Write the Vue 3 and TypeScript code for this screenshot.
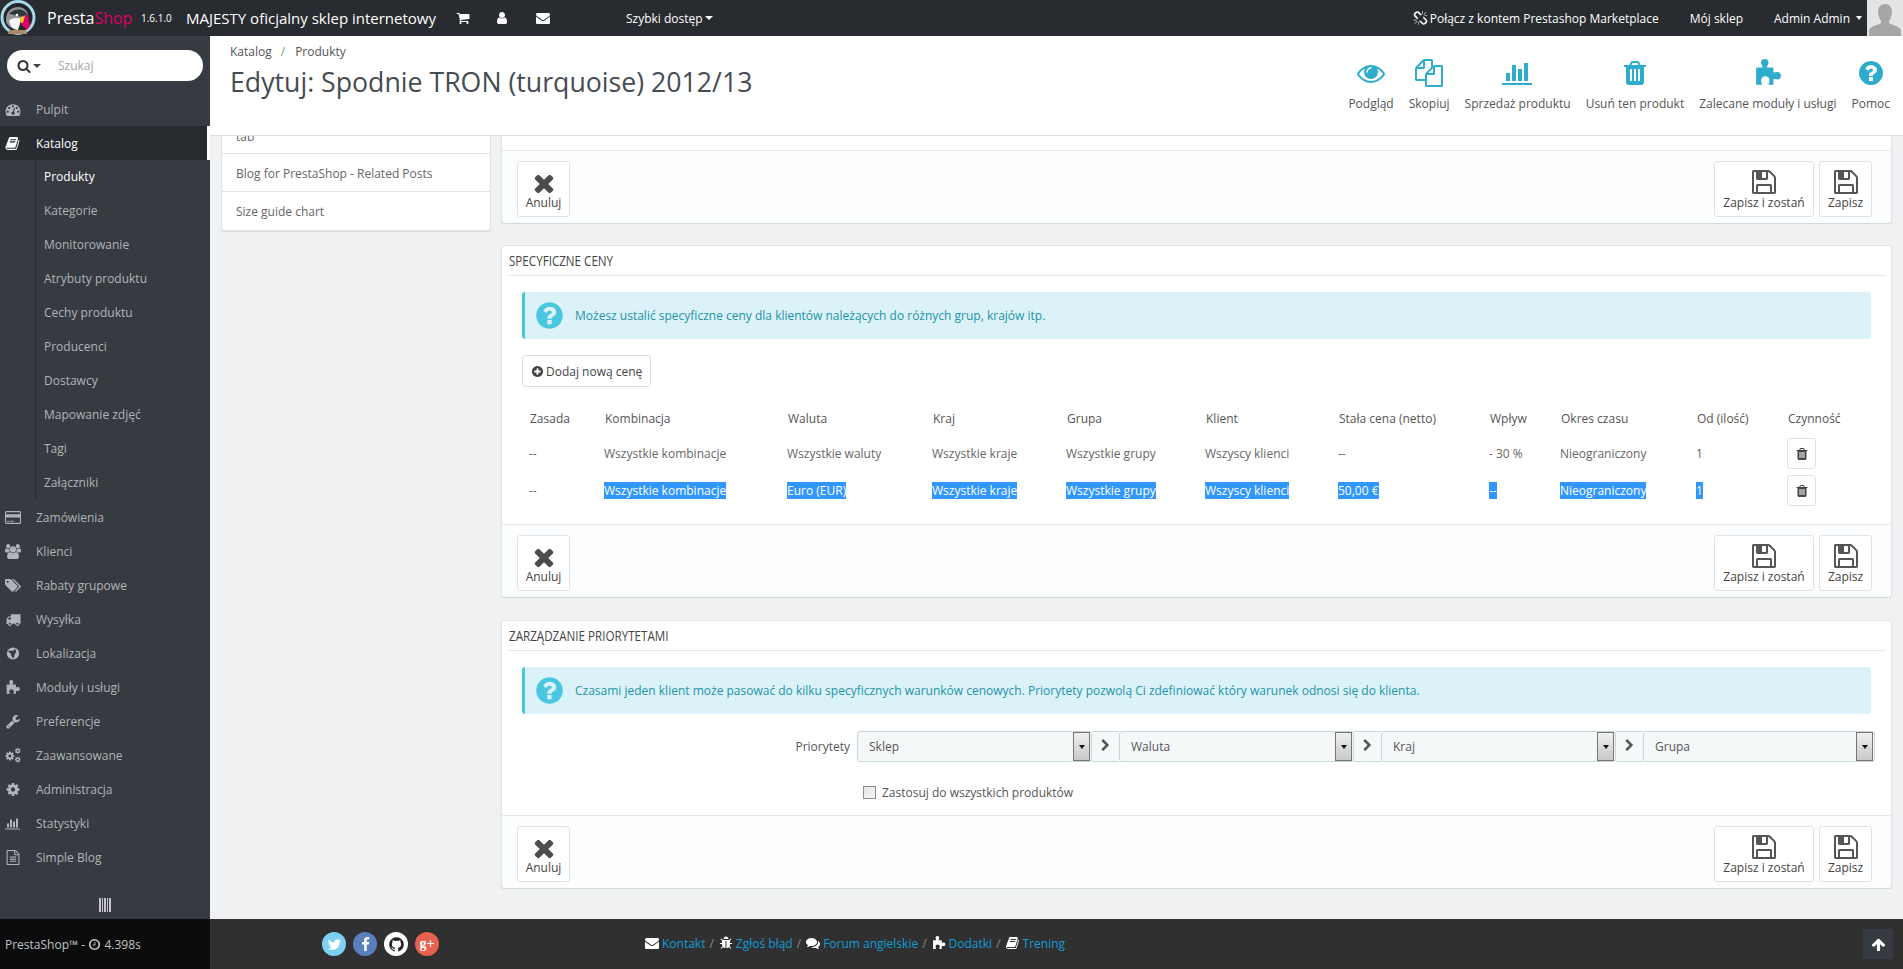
<script setup lang="ts">
type Ic = { d: string; w?: number }
const I: Record<string, Ic> = {
  times: { d: 'M1490 1322q0 40-28 68l-136 136q-28 28-68 28t-68-28l-294-294-294 294q-28 28-68 28t-68-28l-136-136q-28-28-28-68t28-68l294-294-294-294q-28-28-28-68t28-68l136-136q28-28 68-28t68 28l294 294 294-294q28-28 68-28t68 28l136 136q28 28 28 68t-28 68l-294 294 294 294q28 28 28 68z' },
  save: { d: 'M512 1536h768v-384h-768v384zm896 0h128v-896q0-14-10-38.5t-20-34.5l-281-281q-10-10-34-20t-39-10v416q0 40-28 68t-68 28h-576q-40 0-68-28t-28-68v-416h-128v1280h128v-416q0-40 28-68t68-28h832q40 0 68 28t28 68v416zm-384-928v-320q0-13-9.5-22.5t-22.5-9.5h-192q-13 0-22.5 9.5t-9.5 22.5v320q0 13 9.5 22.5t22.5 9.5h192q13 0 22.5-9.5t9.5-22.5zm640 32v928q0 40-28 68t-68 28h-1344q-40 0-68-28t-28-68v-1344q0-40 28-68t68-28h928q40 0 88 20t76 48l280 280q28 28 48 76t20 88z' },
  help: { d: 'M1024 1376v-192q0-14-9-23t-23-9h-192q-14 0-23 9t-9 23v192q0 14 9 23t23 9h192q14 0 23-9t9-23zm256-672q0-88-55.5-163t-138.5-116-170-41q-243 0-371 213-15 24 8 42l132 100q7 6 19 6 16 0 25-12 53-68 86-92 34-24 86-24 48 0 85.5 26t37.5 59q0 38-20 61t-68 45q-63 28-115.5 86.5t-52.5 125.5v36q0 14 9 23t23 9h192q14 0 23-9t9-23q0-19 21.5-49.5t54.5-49.5q32-18 49-28.5t46-35 44.5-48 28-60.5 12.5-81zm384 192q0 209-103 385.5t-279.5 279.5-385.5 103-385.5-103-279.5-279.5-103-385.5 103-385.5 279.5-279.5 385.5-103 385.5 103 279.5 279.5 103 385.5z' },
  trash: { d: 'M704 1376v-704q0-14-9-23t-23-9h-64q-14 0-23 9t-9 23v704q0 14 9 23t23 9h64q14 0 23-9t9-23zm256 0v-704q0-14-9-23t-23-9h-64q-14 0-23 9t-9 23v704q0 14 9 23t23 9h64q14 0 23-9t9-23zm256 0v-704q0-14-9-23t-23-9h-64q-14 0-23 9t-9 23v704q0 14 9 23t23 9h64q14 0 23-9t9-23zm-544-992h448l-48-117q-7-9-17-11h-317q-10 2-17 11zm928 32v64q0 14-9 23t-23 9h-96v948q0 83-47 143.5t-113 60.5h-832q-66 0-113-58.5t-47-141.5v-952h-96q-14 0-23-9t-9-23v-64q0-14 9-23t23-9h309l70-167q15-37 54-63t79-26h320q40 0 79 26t54 63l70 167h309q14 0 23 9t9 23z' },
  eye: { d: 'M1664 960q-152-236-381-353 61 104 61 225 0 185-131.5 316.5t-316.5 131.5-316.5-131.5-131.5-316.5q0-121 61-225-229 117-381 353 133 205 333.5 326.5t434.5 121.5 434.5-121.5 333.5-326.5zm-720-384q0-20-14-34t-34-14q-125 0-214.5 89.5t-89.5 214.5q0 20 14 34t34 14 34-14 14-34q0-86 61-147t147-61q20 0 34-14t14-34zm848 384q0 34-20 69-140 230-376.5 368.5t-499.5 138.5-499.5-139-376.5-368q-20-35-20-69t20-69q140-229 376.5-368t499.5-139 499.5 139 376.5 368q20 35 20 69z' },
  files: { d: 'M1696 384q40 0 68 28t28 68v1216q0 40-28 68t-68 28h-960q-40 0-68-28t-28-68v-288h-544q-40 0-68-28t-28-68v-672q0-40 20-88t48-76l408-408q28-28 76-48t88-20h416q40 0 68 28t28 68v328q68-40 128-40h416zm-544 213l-299 299h299v-299zm-640-384l-299 299h299v-299zm196 647l316-316v-416h-384v416q0 40-28 68t-68 28h-416v640h512v-256q0-40 20-88t48-76zm956 804v-1152h-384v416q0 40-28 68t-68 28h-416v640h896z' },
  chart: { w: 2048, d: 'M512 896v512h-256v-512h256zm384-512v1024h-256v-1024h256zm1024 1152v128h-2048v-1536h128v1408h1920zm-640-896v768h-256v-768h256zm384-384v1152h-256v-1152h256z' },
  search: { d: 'M1216 832q0-185-131.5-316.5t-316.5-131.5-316.5 131.5-131.5 316.5 131.5 316.5 316.5 131.5 316.5-131.5 131.5-316.5zm512 832q0 52-38 90t-90 38q-54 0-90-38l-343-342q-179 124-399 124-143 0-273.5-55.5t-225-150-150-225-55.5-273.5 55.5-273.5 150-225 225-150 273.5-55.5 273.5 55.5 225 150 150 225 55.5 273.5q0 220-124 399l343 343q37 37 37 90z' },
  cart: { d: 'M704 1536q0 52-38 90t-90 38-90-38-38-90 38-90 90-38 90 38 38 90zm896 0q0 52-38 90t-90 38-90-38-38-90 38-90 90-38 90 38 38 90zm128-1088v512q0 24-16.5 42.5t-40.5 21.5l-1044 122q13 60 13 70 0 16-24 64h920q26 0 45 19t19 45-19 45-45 19h-1024q-26 0-45-19t-19-45q0-11 8-31.5t16-36 21.5-40 15.5-29.5l-177-823h-204q-26 0-45-19t-19-45 19-45 45-19h256q16 0 28.5 6.5t19.5 15.5 13 24.5 8 26 5.5 29.5 4.5 26h1201q26 0 45 19t19 45z' },
  user: { d: 'M1536 1399q0 109-62.5 187t-150.5 78h-854q-88 0-150.5-78t-62.5-187q0-85 8.5-160.5t31.5-152 58.5-131 94-89 134.5-34.5q131 128 313 128t313-128q76 0 134.5 34.5t94 89 58.5 131 31.5 152 8.5 160.5zm-256-887q0 159-112.5 271.5t-271.5 112.5-271.5-112.5-112.5-271.5 112.5-271.5 271.5-112.5 271.5 112.5 112.5 271.5z' },
  envelope: { d: 'M1792 710v794q0 66-47 113t-113 47h-1472q-66 0-113-47t-47-113v-794q44 49 101 87 362 246 497 345 57 42 92.5 65.5t94.5 48 110 24.5h2q51 0 110-24.5t94.5-48 92.5-65.5q170-123 498-345 57-39 100-87zm0-294q0 79-49 151t-122 123q-376 261-468 325-10 7-42.5 30.5t-54 38-52 32.5-57.5 27-50 9h-2q-23 0-50-9t-57.5-27-52-32.5-54-38-42.5-30.5q-91-64-262-182.5t-205-142.5q-62-42-117-115.5t-55-136.5q0-78 41.5-130t118.5-52h1472q65 0 112.5 47t47.5 113z' },
  unlink: { d: 'M503 1271l-256 256q-10 9-23 9-12 0-23-9-9-10-9-23t9-23l256-256q10-9 23-9t23 9q9 10 9 23t-9 23zm169 41v320q0 14-9 23t-23 9-23-9-9-23v-320q0-14 9-23t23-9 23 9 9 23zm-224-224q0 14-9 23t-23 9h-320q-14 0-23-9t-9-23 9-23 23-9h320q14 0 23 9t9 23zm1264 128q0 120-85 203l-147 146q-83 83-203 83-121 0-204-85l-334-335q-21-21-42-56l239-18 273 274q27 27 68 27.5t68-26.5l147-146q28-28 28-67 0-40-28-68l-274-275 18-239q35 21 56 42l336 336q84 86 84 204zm-617-724l-239 18-273-274q-28-28-68-28-39 0-68 27l-147 146q-28 28-28 67 0 40 28 68l274 274-18 240q-35-21-56-42l-336-336q-84-86-84-204 0-120 85-203l147-146q83-83 203-83 121 0 204 85l334 335q21 21 42 56zm633 84q0 14-9 23t-23 9h-320q-14 0-23-9t-9-23 9-23 23-9h320q14 0 23 9t9 23zm-544-544v320q0 14-9 23t-23 9-23-9-9-23v-320q0-14 9-23t23-9 23 9 9 23zm407 151l-256 256q-11 9-23 9t-23-9q-9-10-9-23t9-23l256-256q10-9 23-9t23 9q9 10 9 23t-9 23z' },
  dash: { d: 'M384 1152q0-53-37.5-90.5t-90.5-37.5-90.5 37.5-37.5 90.5 37.5 90.5 90.5 37.5 90.5-37.5 37.5-90.5zm192-448q0-53-37.5-90.5t-90.5-37.5-90.5 37.5-37.5 90.5 37.5 90.5 90.5 37.5 90.5-37.5 37.5-90.5zm428 481l101-382q6-26-7.5-48.5t-38.5-29.5-48 6.5-30 39.5l-101 382q-60 5-107 43.5t-63 98.5q-20 77 20 146t117 89 146-20 89-117q16-60-6-117t-72-91zm660-33q0-53-37.5-90.5t-90.5-37.5-90.5 37.5-37.5 90.5 37.5 90.5 90.5 37.5 90.5-37.5 37.5-90.5zm-640-640q0-53-37.5-90.5t-90.5-37.5-90.5 37.5-37.5 90.5 37.5 90.5 90.5 37.5 90.5-37.5 37.5-90.5zm448 192q0-53-37.5-90.5t-90.5-37.5-90.5 37.5-37.5 90.5 37.5 90.5 90.5 37.5 90.5-37.5 37.5-90.5zm320 448q0 261-141 483-19 29-54 29h-1402q-35 0-54-29-141-221-141-483 0-182 71-348t191-286 286-191 348-71 348 71 286 191 191 286 71 348z' },
  book: { d: 'M1639 478q40 57 18 129l-275 906q-19 64-76.5 107.5t-122.5 43.5h-923q-77 0-148.5-53.5t-99.5-131.5q-24-67-2-127 0-4 3-27t4-37q1-8-3-21.5t-3-19.5q2-11 8-21t16.5-23.5 16.5-23.5q23-38 45-91.5t30-91.5q3-10 .5-30t-.5-28q3-11 17-28t17-23q21-36 42-92t25-90q1-9-2.5-32t.5-28q4-13 22-30.5t22-22.5q19-26 42.5-84.5t27.5-96.5q1-8-3-25.5t-2-26.5q2-8 9-18t18-23 17-21q8-12 16.5-30.5t15-35 16-36 19.5-32 26.5-23.5 36-11.5 47.5 5.5l-1 3q38-9 51-9h761q74 0 114 56t18 130l-274 906q-36 119-71.5 153.5t-128.5 34.5h-869q-27 0-38 15-11 16-1 43 24 70 144 70h923q29 0 56-15.5t35-41.5l300-987q7-22 5-57 38 15 59 43zm-1064 2q-4 13 2 22.5t20 9.5h608q13 0 25.5-9.5t16.5-22.5l21-64q4-13-2-22.5t-20-9.5h-608q-13 0-25.5 9.5t-16.5 22.5zm-83 256q-4 13 2 22.5t20 9.5h608q13 0 25.5-9.5t16.5-22.5l21-64q4-13-2-22.5t-20-9.5h-608q-13 0-25.5 9.5t-16.5 22.5z' },
  card: { w: 1920, d: 'M1760 128q66 0 113 47t47 113v1216q0 66-47 113t-113 47h-1600q-66 0-113-47t-47-113v-1216q0-66 47-113t113-47h1600zm-1600 128q-13 0-22.5 9.5t-9.5 22.5v224h1664v-224q0-13-9.5-22.5t-22.5-9.5h-1600zm1600 1280q13 0 22.5-9.5t9.5-22.5v-608h-1664v608q0 13 9.5 22.5t22.5 9.5h1600zm-1504-128v-128h256v128h-256zm384 0v-128h384v128h-384z' },
  users: { w: 1920, d: 'M593 896q-162 5-265 128h-134q-82 0-138-40.5t-56-118.5q0-353 124-353 6 0 43.5 21t97.5 42.5 119 21.5q67 0 133-23-5 37-5 66 0 139 81 256zm1071 637q0 120-73 189.5t-194 69.5h-874q-121 0-194-69.5t-73-189.5q0-53 3.5-103.5t14-109 26.5-108.5 43-97.5 62-81 85.5-53.5 111.5-20q10 0 43 21.5t73 48 107 48 135 21.5 135-21.5 107-48 73-48 43-21.5q61 0 111.5 20t85.5 53.5 62 81 43 97.5 26.5 108.5 14 109 3.5 103.5zm-1024-1277q0 106-75 181t-181 75-181-75-75-181 75-181 181-75 181 75 75 181zm704 384q0 159-112.5 271.5t-271.5 112.5-271.5-112.5-112.5-271.5 112.5-271.5 271.5-112.5 271.5 112.5 112.5 271.5zm576 225q0 78-56 118.5t-138 40.5h-134q-103-123-265-128 81-117 81-256 0-29-5-66 66 23 133 23 59 0 119-21.5t97.5-42.5 43.5-21q124 0 124 353zm-128-609q0 106-75 181t-181 75-181-75-75-181 75-181 181-75 181 75 75 181z' },
  tags: { w: 1920, d: 'M448 448q0-53-37.5-90.5t-90.5-37.5-90.5 37.5-37.5 90.5 37.5 90.5 90.5 37.5 90.5-37.5 37.5-90.5zm1067 576q0 53-37 90l-491 492q-39 37-91 37-53 0-90-37l-715-716q-38-37-64.5-101t-26.5-117v-416q0-52 38-90t90-38h416q53 0 117 26.5t102 64.5l715 714q37 39 37 91zm384 0q0 53-37 90l-491 492q-39 37-91 37-36 0-59-14t-53-45l470-470q37-37 37-90 0-52-37-91l-715-714q-38-38-102-64.5t-117-26.5h224q53 0 117 26.5t102 64.5l715 714q37 39 37 91z' },
  truck: { d: 'M640 1408q0-52-38-90t-90-38-90 38-38 90 38 90 90 38 90-38 38-90zm-384-512h384v-256h-158q-13 0-22 9l-195 195q-9 9-9 22v30zm1280 512q0-52-38-90t-90-38-90 38-38 90 38 90 90 38 90-38 38-90zm256-1088v1024q0 15-4 26.5t-13.5 18.5-16.5 11.5-23.5 6-22.5 2-25.5 0-22.5-.5q0 106-75 181t-181 75-181-75-75-181h-384q0 106-75 181t-181 75-181-75-75-181h-64q-3 0-22.5.5t-25.5 0-22.5-2-23.5-6-16.5-11.5-13.5-18.5-4-26.5q0-26 19-45t45-19v-320q0-8-.5-35t0-38 2.5-34.5 6.5-37 14-30.5 22.5-30l198-198q19-19 50.5-32t58.5-13h160v-192q0-26 19-45t45-19h1024q26 0 45 19t19 45z' },
  wrench: { d: 'M448 1472q0-26-19-45t-45-19-45 19-19 45 19 45 45 19 45-19 19-45zm644-420l-682 682q-37 37-90 37-52 0-91-37l-106-108q-38-36-38-90 0-53 38-91l681-681q39 98 114.5 173.5t173.5 114.5zm634-435q0 39-23 106-47 134-164.5 217.5t-258.5 83.5q-185 0-316.5-131.5t-131.5-316.5 131.5-316.5 316.5-131.5q58 0 121.5 16.5t107.5 46.5q16 11 16 28t-16 28l-293 169v224l193 107q5-3 79-48.5t135.5-81 70.5-35.5q15 0 23.5 10t8.5 25z' },
  cog: { d: 'M1152 896q0-106-75-181t-181-75-181 75-75 181 75 181 181 75 181-75 75-181zm512-109v222q0 12-8 23t-20 13l-185 28q-19 54-39 91 35 50 107 138 10 12 10 25t-9 23q-27 37-99 108t-94 71q-12 0-26-9l-138-108q-44 23-91 38-16 136-29 186-7 28-36 28h-222q-14 0-24.5-8.5t-11.5-21.5l-28-184q-49-16-90-37l-141 107q-10 9-25 9-14 0-25-11-126-114-165-168-7-10-7-23 0-12 8-23 15-21 51-66.5t54-70.5q-27-50-41-99l-183-27q-13-2-21-12.5t-8-23.5v-222q0-12 8-23t19-13l186-28q14-46 39-92-40-57-107-138-10-12-10-24 0-10 9-23 26-36 98.5-107.5t94.5-71.5q13 0 26 10l138 107q44-23 91-38 16-136 29-186 7-28 36-28h222q14 0 24.5 8.5t11.5 21.5l28 184q49 16 90 37l142-107q9-9 24-9 13 0 25 10 129 119 165 170 7 8 7 22 0 12-8 23-15 21-51 66.5t-54 70.5q26 50 41 98l183 28q13 2 21 12.5t8 23.5z' },
  file: { d: 'M1596 380q28 28 48 76t20 88v1152q0 40-28 68t-68 28h-1344q-40 0-68-28t-28-68v-1600q0-40 28-68t68-28h896q40 0 88 20t76 48zm-444-244v376h376q-10-29-22-41l-313-313q-12-12-41-22zm384 1528v-1024h-416q-40 0-68-28t-28-68v-416h-768v1536h1280zm-1024-864q0-14 9-23t23-9h704q14 0 23 9t9 23v64q0 14-9 23t-23 9h-704q-14 0-23-9t-9-23v-64zm736 224q14 0 23 9t9 23v64q0 14-9 23t-23 9h-704q-14 0-23-9t-9-23v-64q0-14 9-23t23-9h704zm0 256q14 0 23 9t9 23v64q0 14-9 23t-23 9h-704q-14 0-23-9t-9-23v-64q0-14 9-23t23-9h704z' },
  chevron: { d: 'M1363 877l-742 742q-19 19-45 19t-45-19l-166-166q-19-19-19-45t19-45l531-531-531-531q-19-19-19-45t19-45l166-166q19-19 45-19t45 19l742 742q19 19 19 45t-19 45z' },
  plus: { d: 'M1344 960v-128q0-26-19-45t-45-19h-256v-256q0-26-19-45t-45-19h-128q-26 0-45 19t-19 45v256h-256q-26 0-45 19t-19 45v128q0 26 19 45t45 19h256v256q0 26 19 45t45 19h128q26 0 45-19t19-45v-256h256q26 0 45-19t19-45zm320-64q0 209-103 385.5t-279.5 279.5-385.5 103-385.5-103-279.5-279.5-103-385.5 103-385.5 279.5-279.5 385.5-103 385.5 103 279.5 279.5 103 385.5z' },
  up: { d: 'M1675 971q0 51-37 90l-75 75q-38 38-91 38-54 0-90-38l-294-293v704q0 52-37.5 84.5t-90.5 32.5h-128q-53 0-90.5-32.5t-37.5-84.5v-704l-294 293q-36 38-90 38t-90-38l-75-75q-38-38-38-90 0-53 38-91l651-651q35-37 90-37 54 0 91 37l651 651q37 39 37 91z' },
  clock: { d: 'M1024 544v448q0 14-9 23t-23 9h-320q-14 0-23-9t-9-23v-64q0-14 9-23t23-9h224v-352q0-14 9-23t23-9h64q14 0 23 9t9 23zm416 352q0-148-73-273t-198-198-273-73-273 73-198 198-73 273 73 273 198 198 273 73 273-73 198-198 73-273zm224 0q0 209-103 385.5t-279.5 279.5-385.5 103-385.5-103-279.5-279.5-103-385.5 103-385.5 279.5-279.5 385.5-103 385.5 103 279.5 279.5 103 385.5z' },
  bug: { d: 'M1696 960q0 26-19 45t-45 19h-224q0 171-67 290l208 209q19 19 19 45t-19 45q-18 19-45 19t-45-19l-198-197q-5 5-15 13t-42 28.5-65 36.5-82 29-97 13v-896h-128v896q-51 0-101.5-13.5t-87-33-66-39-43.5-32.5l-15-14-183 207q-20 21-48 21-24 0-43-16-19-18-20.5-44.5t15.5-46.5l202-227q-58-114-58-274h-224q-26 0-45-19t-19-45 19-45 45-19h224v-294l-173-173q-19-19-19-45t19-45 45-19 45 19l173 173h844l173-173q19-19 45-19t45 19 19 45-19 45l-173 173v294h224q26 0 45 19t19 45zm-480-576h-640q0-133 93.5-226.5t226.5-93.5 226.5 93.5 93.5 226.5z' },
  comments: { d: 'M1408 768q0 139-94 257t-256.5 186.5-353.5 68.5q-86 0-176-16-124 88-278 128-36 9-86 16h-3q-11 0-20.5-8t-11.5-21q-1-3-1-6.5t.5-6.5 2-6l2.5-5 3.5-5.5 4-5 4.5-5 4-4.5q5-6 23-25t26-29.5 22.5-29 25-38.5 20.5-44q-124-72-195-177t-71-224q0-139 94-257t256.5-186.5 353.5-68.5 353.5 68.5 256.5 186.5 94 257zm384 256q0 120-71 224.5t-195 176.5q10 24 20.5 44t25 38.5 22.5 29 26 29.5 23 25q1 1 4 4.5t4.5 5 4 5 3.5 5.5l2.5 5 2 6 .5 6.5-1 6.5q-3 14-13 22t-22 7q-50-7-86-16-154-40-278-128-90 16-176 16-271 0-472-132 58 4 88 4 161 0 309-45t264-129q125-92 192-212t67-254q0-77-23-152 129 71 204 178t75 230z' },
  twitter: { d: 'M1684 408q-67 98-162 167 1 14 1 42 0 130-38 259.5t-115.5 248.5-184.5 210.5-258 146-323 54.5q-271 0-496-145 35 4 78 4 225 0 401-138-105-2-188-64.5t-114-159.5q33 5 61 5 43 0 85-11-112-23-185.5-111.5t-73.5-205.5v-4q68 38 146 41-66-44-105-115t-39-154q0-88 44-163 121 149 294.5 238.5t371.5 99.5q-8-38-8-74 0-134 94.5-228.5t228.5-94.5q140 0 236 102 109-21 205-78-37 115-142 178 92-10 184-50z' },
  facebook: { d: 'M1343 12v264h-157q-86 0-116 36t-30 108v189h293l-39 296h-254v759h-306v-759h-255v-296h255v-218q0-186 104-288.5t277-102.5q147 0 228 12z' },
  github: { d: 'M1664 896q0 251-146.5 451.5t-378.5 277.5q-27 5-39.5-7t-12.5-30v-211q0-97-52-142 57-6 102.5-18t94-39 81-66.5 53-105 20.5-150.5q0-121-79-206 37-91-8-204-28-9-81 11t-92 44l-38 24q-93-26-192-26t-192 26q-16-11-42.5-27t-83.5-38.5-86-13.5q-44 113-7 204-79 85-79 206 0 85 20.5 150t52.5 105 80.5 67 94 39 102.5 18q-40 36-49 103-21 10-45 15t-57 5-65.5-21.5-55.5-62.5q-19-32-48.5-52t-49.5-24l-20-3q-21 0-29 4.5t-5 11.5 9 14 13 12l7 5q22 10 43.5 38t31.5 51l10 23q13 38 44 61.5t67 30 69.5 7 55.5-3.5l23-4q0 38 .5 89t.5 54q0 18-13 30t-40 7q-232-77-378.5-277.5t-146.5-451.5q0-209 103-385.5t279.5-279.5 385.5-103 385.5 103 279.5 279.5 103 385.5z' }
}
const puzzle = 'M2 8H8C8 6 6.5 5 6.5 3.5A3.5 3.5 0 0 1 13.5 3.5C13.5 5 12 6 12 8H18V12C19 13 20 12 21.5 12A3.5 3.5 0 0 1 21.5 19C20 19 19 18 18 19V24H13.5C13.5 22.5 14.5 21.5 14.5 20A4 4 0 0 0 6.5 20C6.5 21.5 7.5 22.5 7.5 24H2Z'
const vb = (k: string) => `0 0 ${I[k].w ?? 1792} 1792`

const subItems = ['Produkty', 'Kategorie', 'Monitorowanie', 'Atrybuty produktu', 'Cechy produktu', 'Producenci', 'Dostawcy', 'Mapowanie zdjęć', 'Tagi', 'Załączniki']
const lowerMenu = [
  { label: 'Zamówienia', icon: 'card' },
  { label: 'Klienci', icon: 'users' },
  { label: 'Rabaty grupowe', icon: 'tags' },
  { label: 'Wysyłka', icon: 'truck' },
  { label: 'Lokalizacja', icon: 'globe' },
  { label: 'Moduły i usługi', icon: 'puzzle' },
  { label: 'Preferencje', icon: 'wrench' },
  { label: 'Zaawansowane', icon: 'cogs' },
  { label: 'Administracja', icon: 'cog' },
  { label: 'Statystyki', icon: 'chart' },
  { label: 'Simple Blog', icon: 'file' }
]
const columns = ['Zasada', 'Kombinacja', 'Waluta', 'Kraj', 'Grupa', 'Klient', 'Stała cena (netto)', 'Wpływ', 'Okres czasu', 'Od (ilość)', 'Czynność']
const colWidths = [75, 183, 145, 134, 139, 133, 151, 71, 136, 91, 92]
const rows = [
  { selected: false, cells: ['--', 'Wszystkie kombinacje', 'Wszystkie waluty', 'Wszystkie kraje', 'Wszystkie grupy', 'Wszyscy klienci', '--', '- 30 %', 'Nieograniczony', '1'] },
  { selected: true, cells: ['--', 'Wszystkie kombinacje', 'Euro (EUR)', 'Wszystkie kraje', 'Wszystkie grupy', 'Wszyscy klienci', '50,00 €', '--', 'Nieograniczony', '1'] }
]
const priorities = ['Sklep', 'Waluta', 'Kraj', 'Grupa']
const footLinks = [
  { label: 'Kontakt', icon: 'envelope', sep: true },
  { label: 'Zgłoś błąd', icon: 'bug', sep: true },
  { label: 'Forum angielskie', icon: 'comments', sep: true },
  { label: 'Dodatki', icon: 'puzzle', sep: true },
  { label: 'Trening', icon: 'book', sep: false }
]
</script>

<template>
  <div class="app">
    <header class="top">
      <svg class="logo" viewBox="0 0 36 36">
        <circle cx="18" cy="17.5" r="16" fill="#23262a" stroke="#a5d9e8" stroke-width="3" />
        <path d="M6 20C6 12 11 7 18 7c6 0 10 4 10 9-3 0-5 1-7 3-1 5-2 8-4 10-6 0-11-4-11-9Z" fill="#8f9499" />
        <path d="M9 14c3-4 10-6 15-3 2 1 3 3 4 5-3-1-5 0-7 1-4-1-8-3-12-3Z" fill="#33363a" />
        <path d="M9 21c1-2 4-3 7-3 3 0 5 0 5 2l-3 10c-5 0-8-4-9-9Z" fill="#f4f4f4" />
        <path d="M20 17l8-2 2 11-3 4-6-6Z" fill="#df0067" />
        <path d="M20 17l5-1-2 7-3-1Z" fill="#f3c332" />
        <circle cx="17" cy="15" r="1.3" fill="#fff" />
        <path d="M9 30h17l1 4H8Z" fill="#a98c66" />
      </svg>
      <span class="brand"><span>Presta</span><span class="pink">Shop</span></span>
      <span class="version">1.6.1.0</span>
      <span class="shop-name">MAJESTY oficjalny sklep internetowy</span>
      <svg class="hi hi-cart" :viewBox="vb('cart')"><path :d="I.cart.d" /></svg>
      <svg class="hi hi-user" :viewBox="vb('user')"><path :d="I.user.d" /></svg>
      <svg class="hi hi-env" :viewBox="vb('envelope')"><path :d="I.envelope.d" /></svg>
      <span class="quick">Szybki dostęp<i class="caret"></i></span>
      <span class="top-right">
        <svg class="chain" :viewBox="vb('unlink')"><path :d="I.unlink.d" /></svg>
        <span class="market">Połącz z kontem Prestashop Marketplace</span>
        <span class="myshop">Mój sklep</span>
        <span class="admin">Admin Admin<i class="caret"></i></span>
        <span class="avatar">
          <svg viewBox="0 0 36 36"><path d="M18 4c5 0 7 4 7 8 0 4-2 7-3 9v2c3 2 10 3 12 7v6H2v-6c2-4 9-5 12-7v-2c-1-2-3-5-3-9 0-4 2-8 7-8Z" fill="#a6a6a6" /></svg>
        </span>
      </span>
    </header>

    <div class="middle">
      <nav class="side">
        <div class="search">
          <svg class="search-ic" :viewBox="vb('search')"><path :d="I.search.d" /></svg>
          <i class="caret dark"></i>
          <span class="search-ph">Szukaj</span>
        </div>
        <div class="mi">
          <span class="mi-ic"><svg :viewBox="vb('dash')"><path :d="I.dash.d" /></svg></span>Pulpit
        </div>
        <div class="mi active">
          <span class="mi-ic"><svg :viewBox="vb('book')"><path :d="I.book.d" /></svg></span>Katalog
        </div>
        <ul class="sub">
          <li v-for="(s, i) in subItems" :key="s" :class="{ cur: i === 0 }">{{ s }}</li>
        </ul>
        <div v-for="m in lowerMenu" :key="m.label" class="mi">
          <span class="mi-ic">
            <svg v-if="m.icon === 'puzzle'" viewBox="0 0 26 26"><path :d="puzzle" /></svg>
            <svg v-else-if="m.icon === 'globe'" viewBox="0 0 16 16">
              <circle cx="8" cy="8" r="6.5" />
              <path d="M3 5c2-1 3 1 5 0s2-2 3-2c-1 2 1 3 0 4-2 2-1 5-3 6-1-2-3-3-2-5-1-1-3-1-3-3Z" fill="#363a41" />
            </svg>
            <svg v-else-if="m.icon === 'cogs'" viewBox="0 0 1920 1792">
              <path :d="I.cog.d" transform="translate(-40 330) scale(.7)" />
              <path :d="I.cog.d" transform="translate(1130 -60) scale(.44)" />
              <path :d="I.cog.d" transform="translate(1130 1000) scale(.44)" />
            </svg>
            <svg v-else :viewBox="vb(m.icon)"><path :d="I[m.icon].d" /></svg>
          </span>{{ m.label }}
        </div>
        <div class="collapse"><i v-for="n in 5" :key="n"></i></div>
      </nav>

      <main class="main">
        <div class="head">
          <div class="head-left">
            <div class="crumb"><span>Katalog</span><b>/</b><span>Produkty</span></div>
            <h1>Edytuj: Spodnie TRON (turquoise) 2012/13</h1>
          </div>
          <div class="tools">
            <div class="tool"><svg class="t-ic" :viewBox="vb('eye')"><path :d="I.eye.d" /></svg><span>Podgląd</span></div>
            <div class="tool"><svg class="t-ic" :viewBox="vb('files')"><path :d="I.files.d" /></svg><span>Skopiuj</span></div>
            <div class="tool"><svg class="t-ic t-chart" :viewBox="vb('chart')"><path :d="I.chart.d" /></svg><span>Sprzedaż produktu</span></div>
            <div class="tool"><svg class="t-ic" :viewBox="vb('trash')"><path :d="I.trash.d" /></svg><span>Usuń ten produkt</span></div>
            <div class="tool"><svg class="t-ic" viewBox="0 0 26 26"><path :d="puzzle" /></svg><span>Zalecane moduły i usługi</span></div>
            <div class="tool"><svg class="t-ic" :viewBox="vb('help')"><path :d="I.help.d" /></svg><span>Pomoc</span></div>
          </div>
        </div>

        <div class="content">
          <aside class="tabs">
            <div class="tab clipped">tab</div>
            <div class="tab">Blog for PrestaShop - Related Posts</div>
            <div class="tab last">Size guide chart</div>
          </aside>

          <div class="panels">
            <section class="panel first">
              <div class="stub"></div>
              <footer class="pfoot">
                <button class="bt cancel"><svg class="x" :viewBox="vb('times')"><path :d="I.times.d" /></svg>Anuluj</button>
                <button class="bt stay"><svg class="fl" :viewBox="vb('save')"><path :d="I.save.d" /></svg>Zapisz i zostań</button>
                <button class="bt"><svg class="fl" :viewBox="vb('save')"><path :d="I.save.d" /></svg>Zapisz</button>
              </footer>
            </section>

            <section class="panel second">
              <h3><span>Specyficzne ceny</span></h3>
              <div class="pbody">
                <div class="alert">
                  <svg :viewBox="vb('help')"><path :d="I.help.d" /></svg>
                  <span>Możesz ustalić specyficzne ceny dla klientów należących do różnych grup, krajów itp.</span>
                </div>
                <button class="add"><svg :viewBox="vb('plus')"><path :d="I.plus.d" /></svg>Dodaj nową cenę</button>
                <table class="tbl">
                  <colgroup><col v-for="(w, i) in colWidths" :key="i" :style="{ width: w + 'px' }" /></colgroup>
                  <thead><tr><th v-for="c in columns" :key="c"><span>{{ c }}</span></th></tr></thead>
                  <tbody>
                    <tr v-for="(r, ri) in rows" :key="ri">
                      <td v-for="(c, ci) in r.cells" :key="ci">
                        <span :class="{ sel: r.selected && ci > 0 }">{{ c }}</span>
                      </td>
                      <td><button class="del"><svg :viewBox="vb('trash')"><path :d="I.trash.d" /></svg></button></td>
                    </tr>
                  </tbody>
                </table>
              </div>
              <footer class="pfoot">
                <button class="bt cancel"><svg class="x" :viewBox="vb('times')"><path :d="I.times.d" /></svg>Anuluj</button>
                <button class="bt stay"><svg class="fl" :viewBox="vb('save')"><path :d="I.save.d" /></svg>Zapisz i zostań</button>
                <button class="bt"><svg class="fl" :viewBox="vb('save')"><path :d="I.save.d" /></svg>Zapisz</button>
              </footer>
            </section>

            <section class="panel third">
              <h3><span>Zarządzanie priorytetami</span></h3>
              <div class="pbody">
                <div class="alert">
                  <svg :viewBox="vb('help')"><path :d="I.help.d" /></svg>
                  <span>Czasami jeden klient może pasować do kilku specyficznych warunków cenowych. Priorytety pozwolą Ci zdefiniować który warunek odnosi się do klienta.</span>
                </div>
                <div class="prio">
                  <label>Priorytety</label>
                  <div class="group">
                    <template v-for="(p, i) in priorities" :key="p">
                      <div class="sel-box" :class="{ lastsel: i === 3 }">
                        <span>{{ p }}</span><i class="drop"><b></b></i>
                      </div>
                      <div v-if="i < 3" class="addon"><svg :viewBox="vb('chevron')"><path :d="I.chevron.d" /></svg></div>
                    </template>
                  </div>
                </div>
                <div class="check"><i class="cb"></i><span>Zastosuj do wszystkich produktów</span></div>
              </div>
              <footer class="pfoot">
                <button class="bt cancel"><svg class="x" :viewBox="vb('times')"><path :d="I.times.d" /></svg>Anuluj</button>
                <button class="bt stay"><svg class="fl" :viewBox="vb('save')"><path :d="I.save.d" /></svg>Zapisz i zostań</button>
                <button class="bt"><svg class="fl" :viewBox="vb('save')"><path :d="I.save.d" /></svg>Zapisz</button>
              </footer>
            </section>
          </div>
        </div>
      </main>
    </div>

    <footer class="foot">
      <div class="foot-left">PrestaShop™ - <svg :viewBox="vb('clock')"><path :d="I.clock.d" /></svg> 4.398s</div>
      <div class="social">
        <span class="soc tw"><svg :viewBox="vb('twitter')"><path :d="I.twitter.d" /></svg></span>
        <span class="soc fb"><svg :viewBox="vb('facebook')"><path :d="I.facebook.d" /></svg></span>
        <span class="soc gh"><svg :viewBox="vb('github')"><path :d="I.github.d" /></svg></span>
        <span class="soc gp">g+</span>
      </div>
      <div class="links">
        <span v-for="l in footLinks" :key="l.label" class="lnk">
          <svg v-if="l.icon === 'puzzle'" viewBox="0 0 26 26"><path :d="puzzle" /></svg>
          <svg v-else :viewBox="vb(l.icon)"><path :d="I[l.icon].d" /></svg>
          <a>{{ l.label }}</a><em v-if="l.sep">/</em>
        </span>
      </div>
      <div class="to-top"><svg :viewBox="vb('up')"><path :d="I.up.d" /></svg></div>
    </footer>
  </div>
</template>

<style>
html, body { margin: 0; padding: 0; overflow: hidden; }
</style>

<style scoped>
* { box-sizing: border-box; }
.app {
  height: 969px; width: 1903px; display: flex; flex-direction: column; overflow: hidden;
  font: 12px/17px "Open Sans", "Noto Sans", sans-serif; color: #555; background: #eff1f2;
}
svg { fill: currentColor; display: block; }

/* top bar */
.top { height: 36px; flex: none; display: flex; align-items: center; background: #282b30; color: #fff; }
.logo { width: 36px; height: 36px; flex: none; }
.brand { margin-left: 11px; font-size: 16px; width: 85px; white-space: nowrap; }
.pink { color: #df0067; }
.version { margin-left: 9px; font-size: 10px; width: 36px; }
.shop-name { font-size: 15px; margin-left: 9px; width: 251px; white-space: nowrap; }
.hi { height: 14px; width: 14px; flex: none; }
.hi-cart { margin-left: 19px; }
.hi-user { margin-left: 25px; }
.hi-env { margin-left: 27px; }
.quick { margin-left: 76px; display: flex; align-items: center; white-space: nowrap; }
.caret { display: inline-block; width: 0; height: 0; margin-left: 2px; border-left: 4px solid transparent; border-right: 4px solid transparent; border-top: 4px solid #fff; }
.caret.dark { border-top-color: #444; margin-left: 2px; }
.top-right { margin-left: auto; display: flex; align-items: center; }
.chain { width: 15px; height: 15px; }
.market { margin-left: 2px; white-space: nowrap; }
.myshop { margin-left: 31px; }
.admin { margin-left: 31px; display: flex; align-items: center; white-space: nowrap; }
.admin .caret { margin-left: 6px; border-left-width: 3px; border-right-width: 3px; }
.avatar { width: 36px; height: 36px; margin-left: 5px; background: #e4e4e4; }
.avatar svg { width: 36px; height: 36px; }

.middle { flex: 1; display: flex; min-height: 0; }

/* sidebar */
.side { width: 210px; flex: none; background: #363a41; color: #b1b4b8; position: relative; padding-top: 14px; }
.search { height: 31px; width: 196px; margin-left: 7px; margin-bottom: 11px; background: #fff; border-radius: 16px; display: flex; align-items: center; padding-left: 10px; color: #333; }
.search-ic { width: 14px; height: 14px; }
.search-ph { margin-left: 17px; color: #a5a5a5; }
.mi { height: 34px; display: flex; align-items: center; padding-left: 5px; }
.mi-ic { width: 31px; flex: none; }
.mi-ic svg { width: 16px; height: 15px; }
.mi.active { background: #282b30; color: #fff; border-right: 3px solid #fff; }
.sub { list-style: none; margin: 0 0 0 35px; padding: 0 0 0 8px; border-left: 1px solid #282b30; }
.sub li { height: 34px; line-height: 34px; }
.sub li.cur { color: #fff; }
.collapse { position: absolute; left: 99px; top: 862px; width: 12px; height: 14px; display: flex; gap: 1px; }
.collapse i { width: 1.6px; height: 14px; background: #c7c4d0; }

/* page head */
.main { flex: 1; min-width: 0; display: flex; flex-direction: column; }
.head { height: 100px; flex: none; background: #fff; border-bottom: 1px solid #d8dbdd; display: flex; justify-content: space-between; padding: 6px 5px 0 20px; position: relative; z-index: 2; }
.crumb { display: flex; height: 18px; align-items: center; color: #555; }
.crumb b { font-weight: 400; color: #6aa84f; margin: 0 10px 0 9px; }
h1 { margin: 4px 0 0; font-size: 26.7px; line-height: 36px; font-weight: 400; color: #454c52; white-space: nowrap; }
.tools { display: flex; padding-top: 19px; padding-right: 8px; }
.tool { display: flex; flex-direction: column; align-items: center; margin-left: 15px; height: 60px; justify-content: flex-end; color: #555; position: relative; padding-bottom: 9px; }
.t-ic { color: #2eacce; position: absolute; top: -2px; width: 28px; height: 28px; }
.t-chart { width: 32px; }

/* content */
.content { flex: 1; display: flex; align-items: flex-start; padding: 0 11px; gap: 10px; min-height: 0; overflow: hidden; }
.tabs { width: 270px; flex: none; background: #fff; border: 1px solid #e1e4e6; border-top: 0; border-radius: 0 0 3px 3px; box-shadow: 0 1px 0 #d9dcde; color: #666; }
.tab { height: 38px; line-height: 39px; padding-left: 14px; border-bottom: 1px solid #e1e4e6; }
.tab.clipped { height: 18px; line-height: 17px; display: flex; align-items: flex-end; padding-bottom: 8px; overflow: hidden; }
.tab.last { border-bottom: 0; height: 38px; }
.panels { flex: 1; min-width: 0; display: flex; flex-direction: column; }
.panel { background: #fff; border: 1px solid #e1e4e6; border-radius: 3px; box-shadow: 0 1px 1px #d3d6d8; }
.panel.first { border-top: 0; height: 87px; border-radius: 0 0 3px 3px; }
.panel.second { margin-top: 22px; height: 352px; }
.panel.third { margin-top: 23px; height: 268px; }
.stub { height: 14px; }
h3 { margin: 0 5px; height: 30px; border-bottom: 1px solid #e6e8ea; padding: 0 0 0 2px; font-size: 14px; font-weight: 400; line-height: 30px; color: #444; text-transform: uppercase; white-space: nowrap; overflow: hidden; }
h3 span { display: inline-block; transform: scaleX(.83); transform-origin: left center; }
.pbody { padding: 16px 20px 0; height: 248px; }
.third .pbody { height: 164px; }
.second .pbody { height: 248px; }
.alert { height: 47px; background: #daf2f8; border-left: 3px solid #4ac7e0; border-radius: 3px; display: flex; align-items: center; color: #1f93a9; padding-left: 9px; }
.alert svg { width: 31px; height: 31px; color: #4ac7e0; flex: none; margin-right: 10px; }
.add { display: flex; align-items: center; margin-top: 16px; height: 32px; width: 129px; padding: 0 0 0 8px; background: #fff; border: 1px solid #dbe0e2; border-radius: 3px; font: inherit; color: #444; gap: 2px; }
.add svg { width: 13px; height: 13px; }
.tbl { border-collapse: collapse; table-layout: fixed; width: 1350px; margin-top: 15px; }
th { height: 33px; padding: 0 0 0 8px; text-align: left; font-weight: 400; color: #555; white-space: nowrap; }
td { height: 37px; padding: 0 0 0 7px; color: #666; white-space: nowrap; }
.sel { background: #3297fd; color: #fff; display: inline-block; line-height: 17px; height: 17px; }
.del { display: flex; align-items: center; justify-content: center; width: 29px; height: 31px; background: #fff; border: 1px solid #dfe3e5; border-radius: 3px; padding: 0; color: #444; }
.del svg { width: 14px; height: 14px; }

.pfoot { height: 73px; border-top: 1px solid #e6e8ea; background: #fcfdfe; padding: 10px 19px 0 15px; display: flex; gap: 5px; border-radius: 0 0 3px 3px; }
.bt { height: 56px; width: 53px; padding: 0; background: #fff; border: 1px solid #e0e3e5; border-radius: 3px; font: inherit; color: #444; display: flex; flex-direction: column; align-items: center; }
.bt.cancel { margin-right: auto; }
.bt.stay { width: 100px; }
.x { width: 28px; height: 28px; margin-top: 7px; margin-bottom: -3px; color: #4c4c4c; }
.fl { width: 28px; height: 28px; margin-top: 6px; margin-bottom: -2px; color: #555; }

.prio { display: flex; align-items: center; margin-top: 17px; margin-right: -4px; }
.prio label { width: 328px; text-align: right; margin-right: 7px; flex: none; }
.group { flex: 1; display: flex; height: 31px; min-width: 0; }
.sel-box { width: 235px; flex: none; height: 31px; background: #f5f8f9; border: 1px solid #c7d6db; border-radius: 3px; padding-left: 11px; line-height: 30px; position: relative; color: #555; }
.sel-box.lastsel { flex: 1; width: auto; }
.drop { position: absolute; right: 1px; top: 0; bottom: 0; width: 17px; border: 1px solid #757575; background: linear-gradient(#f0f0f0, #c8c8c8); display: flex; align-items: center; justify-content: center; }
.drop b { width: 0; height: 0; border-left: 3.5px solid transparent; border-right: 3.5px solid transparent; border-top: 4px solid #111; }
.addon { width: 27px; flex: none; display: flex; align-items: center; justify-content: center; background: #f5f8f9; color: #555; padding-bottom: 3px; border-top: 1px solid #c7d6db; border-bottom: 1px solid #c7d6db; }
.addon svg { width: 13px; height: 13px; }
.check { display: flex; align-items: center; margin: 22px 0 0 341px; color: #555; }
.cb { width: 13px; height: 13px; border: 1px solid #8b8f92; background: linear-gradient(135deg, #e2e5e7, #f6f7f8); margin-right: 6px; }

/* footer */
.foot { height: 50px; flex: none; background: #303030; display: flex; align-items: center; position: relative; }
.foot-left { width: 210px; height: 50px; background: #0b0c0e; color: #c3c3c3; padding-left: 5px; display: flex; align-items: center; flex: none; white-space: pre; }
.foot-left svg { width: 13px; height: 13px; }
.social { margin-left: 112px; display: flex; gap: 7px; }
.soc { width: 24px; height: 24px; border-radius: 50%; display: flex; align-items: center; justify-content: center; color: #fff; }
.soc svg { width: 15px; height: 15px; }
.tw { background: #7dd0f2; }
.fb { background: #5a7fbd; }
.gh { background: #fff; color: #222; }
.gh svg { width: 17px; height: 17px; }
.gp { background: #e4624e; font: 700 14px/22px "Liberation Serif", serif; }
.links { margin-left: 206px; display: flex; color: #fff; margin-top: -2px; }
.lnk { display: flex; align-items: center; }
.lnk svg { width: 14px; height: 14px; margin-right: 3px; }
.lnk a { color: #129cd8; white-space: nowrap; }
.lnk em { font-style: normal; color: #8a8a8a; margin: 0 5px 0 4px; }
.to-top { margin-left: auto; margin-right: 10px; width: 30px; height: 30px; background: #363a41; display: flex; align-items: center; justify-content: center; color: #fff; }
.to-top svg { width: 15px; height: 15px; }
</style>
